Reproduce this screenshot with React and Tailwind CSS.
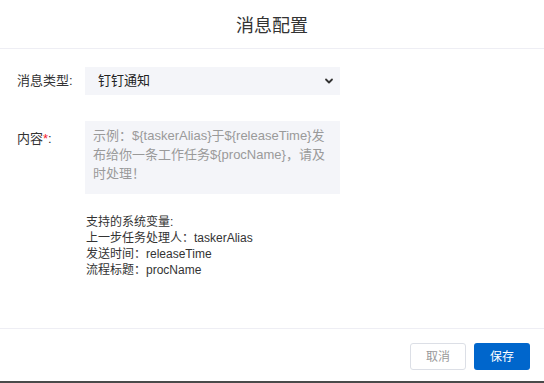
import React from 'react';

const sample = '示例：${taskerAlias}于${releaseTime}发布给你一条工作任务${procName}，请及时处理！';

function Chevron() {
    return (
        <svg width="10" height="10" viewBox="0 0 10 10" className="text-[#333]">
            <path d="M2 3.5 L5 6.5 L8 3.5" fill="none" stroke="currentColor" strokeWidth="1.8" strokeLinecap="round" strokeLinejoin="round" />
        </svg>
    );
}

export default function App() {
    return (
        <div className="w-[544px] h-[383px] bg-white flex flex-col border-b-2 border-[#4a4a4a] font-['Liberation_Sans','Noto_Sans_CJK_SC',sans-serif]" data-name="message-config">
            <div className="h-[49px] shrink-0 flex items-center justify-center border-b border-[#eeeef4]">
                <h2 className="text-[18px] text-[#333] pt-[4px]">消息配置</h2>
            </div>

            <div className="flex-1 flex flex-col pl-[17px] pt-[18px]">
                <div className="flex items-center h-[28px]">
                    <label className="w-[68px] text-[13px] text-[#333]">消息类型:</label>
                    <div className="w-[255px] h-[28px] bg-[#f4f5f9] flex items-center justify-between pl-[13px] pr-[6px]">
                        <span className="text-[13px] text-[#222]">钉钉通知</span>
                        <Chevron />
                    </div>
                </div>

                <div className="flex mt-[26px]">
                    <label className="w-[68px] text-[13px] text-[#333] pt-[8px]">
                        内容<span className="text-[#f5222d]">*</span>:
                    </label>
                    <div className="w-[255px] h-[73px] bg-[#f4f5f9] pl-[8px] pr-[4px] pt-[5px] text-[13px] leading-[19px] text-[#9a9a9a]">
                        {sample}
                    </div>
                </div>

                <div className="ml-[69px] mt-[20px] text-[12px] leading-[16px] text-[#333]">
                    <p>支持的系统变量:</p>
                    <p>上一步任务处理人：taskerAlias</p>
                    <p>发送时间：releaseTime</p>
                    <p>流程标题：procName</p>
                </div>
            </div>

            <div className="h-[53px] shrink-0 border-t border-[#eeeef4] flex items-start justify-end gap-[8px] pr-[14px] pt-[14px]">
                <button className="w-[56px] h-[27px] rounded-[3px] border border-[#dcdfe6] bg-white text-[12px] text-[#999]">取消</button>
                <button className="w-[56px] h-[27px] rounded-[3px] bg-[#0066cc] text-[12px] text-white">保存</button>
            </div>
        </div>
    );
}
